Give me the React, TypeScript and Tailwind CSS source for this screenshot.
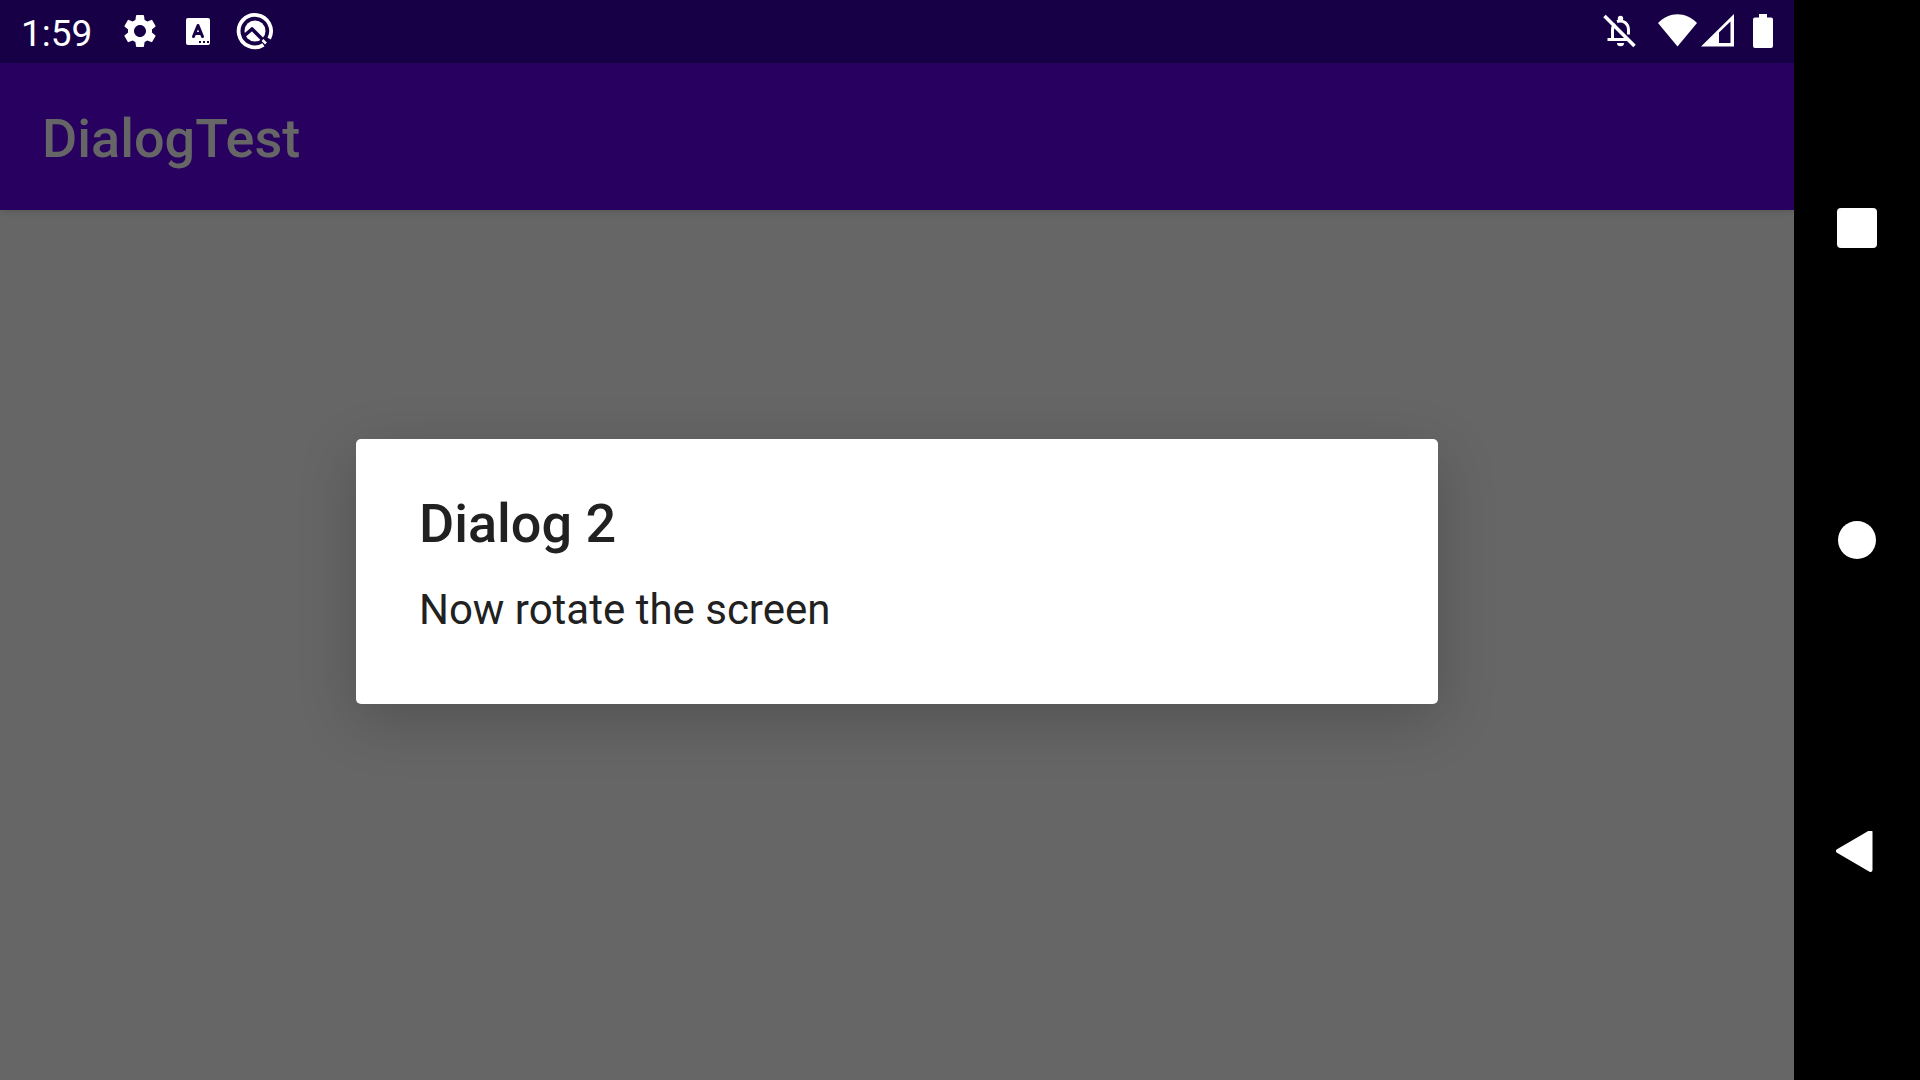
import type { ReactNode } from "react"
import { MdSettings } from "react-icons/md"

const KeyboardIcon = () => {
  return (
    <svg width="24" height="27" viewBox="0 0 24 27" fill="none">
      <rect width="24" height="27" rx="2" fill="#fff" />
      <path d="M7.500 18.500L12 7.500L16.500 18.500M9 15.500H15" stroke="#170046" strokeWidth="3" strokeLinecap="round" strokeLinejoin="round" />
      <path d="M13 23h2v2h-2zM17 23h2v2h-2zM21 23h2v2h-2z" fill="#170046" />
    </svg>
  )
}

const BadgeIcon = () => {
  return (
    <svg width="38" height="38" viewBox="0 0 38 38" fill="none">
      <path d="M27.500 32.800A16.200 16.200 0 1 1 33.200 26.600" stroke="#fff" strokeWidth="3.800" />
      <circle cx="19" cy="19" r="10.500" fill="#fff" />
      <path d="M8.500 23.500L16 17L31 32" stroke="#170046" strokeWidth="3.600" strokeLinejoin="round" />
      <path d="M26.500 28L30 31.500" stroke="#fff" strokeWidth="2.500" />
    </svg>
  )
}

const BellOffIcon = () => {
  return (
    <svg width="34" height="34" viewBox="0 0 34 34" fill="none">
      <path d="M9.500 26V16C9.500 13.500 10.200 11.500 12 10M14 7.500C20 5.500 25.500 9.500 25.500 16V20.500" stroke="#fff" strokeWidth="3" />
      <circle cx="17.500" cy="4.500" r="2.700" fill="#fff" />
      <path d="M4.500 25.500H24" stroke="#fff" strokeWidth="3" />
      <path d="M14 29h7a3.500 3.200 0 0 1-7 0z" fill="#fff" />
      <path d="M1.500 2L31.500 32" stroke="#fff" strokeWidth="3.500" />
    </svg>
  )
}

const WifiIcon = () => {
  return (
    <svg width="39" height="34" viewBox="0 0 39 34">
      <path d="M0 9C11 -2.800 28 -2.800 39 9L19.500 32.500z" fill="#fff" />
    </svg>
  )
}

const SignalIcon = () => {
  return (
    <svg width="33" height="34" viewBox="0 0 33 34">
      <path fillRule="evenodd" d="M0 32.500L33 0V32.500zM18 18.500V29H29.500V7.500z" fill="#fff" />
    </svg>
  )
}

const BatteryIcon = () => {
  return (
    <svg width="20" height="34" viewBox="0 0 20 34">
      <path d="M6 0h8v3.500h4a2 2 0 0 1 2 2V32a2 2 0 0 1-2 2H2a2 2 0 0 1-2-2V5.500a2 2 0 0 1 2-2h4z" fill="#fff" />
    </svg>
  )
}

const StatusBar = () => {
  return (
    <div className="flex h-[63px] items-center justify-between bg-[#170046] pr-[21px] pb-px pl-[21px] text-white">
      <div className="flex items-center">
        <div className="pt-1 text-[37px] leading-none">1:59</div>
        <MdSettings className="ml-7 size-10" />
        <div className="ml-[26px]"><KeyboardIcon /></div>
        <div className="ml-[26px]"><BadgeIcon /></div>
      </div>
      <div className="flex items-center">
        <BellOffIcon />
        <div className="ml-[21px]"><WifiIcon /></div>
        <div className="ml-1"><SignalIcon /></div>
        <div className="ml-[19px]"><BatteryIcon /></div>
      </div>
    </div>
  )
}

const NavButton = ({ label, children }: { label: string; children: ReactNode }) => {
  return (
    <button type="button" aria-label={label} className="flex flex-1 items-center justify-center">
      {children}
    </button>
  )
}

const NavBar = () => {
  return (
    <nav className="flex w-[126px] shrink-0 flex-col bg-black py-[72px]">
      <NavButton label="Recent apps">
        <div className="size-10 rounded bg-white" />
      </NavButton>
      <NavButton label="Home">
        <div className="size-[38px] rounded-full bg-white" />
      </NavButton>
      <NavButton label="Back">
        <svg width="42" height="42" viewBox="0 0 42 42">
          <path d="M2 20L34.500 1V39z" fill="#fff" stroke="#fff" strokeWidth="4" strokeLinejoin="round" />
        </svg>
      </NavButton>
    </nav>
  )
}

const Dialog = () => {
  return (
    <div className="w-[65%] px-[42px]">
      <div
        role="dialog"
        aria-labelledby="dialog-title"
        className="rounded-[5px] bg-white px-[63px] pt-[50px] pb-16 text-[#212121] shadow-[0_16px_60px_rgba(0,0,0,0.2)]"
      >
        <h2 id="dialog-title" className="text-[54px] leading-[70px] font-medium">Dialog 2</h2>
        <p className="mt-5 text-[42px] leading-[61px]">Now rotate the screen</p>
      </div>
    </div>
  )
}

const App = () => {
  return (
    <div className="flex min-h-screen font-[Roboto,sans-serif]">
      <div className="flex flex-1 flex-col bg-[#666666]">
        <StatusBar />
        <div className="relative flex flex-1 flex-col">
          <header className="flex h-[147px] items-center bg-[#270060] px-[42px] pt-1 shadow-[0_2px_6px_rgba(0,0,0,0.12)]">
            <h1 className="text-[54px] leading-[70px] font-medium text-[#666666]">DialogTest</h1>
          </header>
          <div className="absolute inset-0 flex items-center justify-center">
            <Dialog />
          </div>
        </div>
      </div>
      <NavBar />
    </div>
  )
}

export default App
